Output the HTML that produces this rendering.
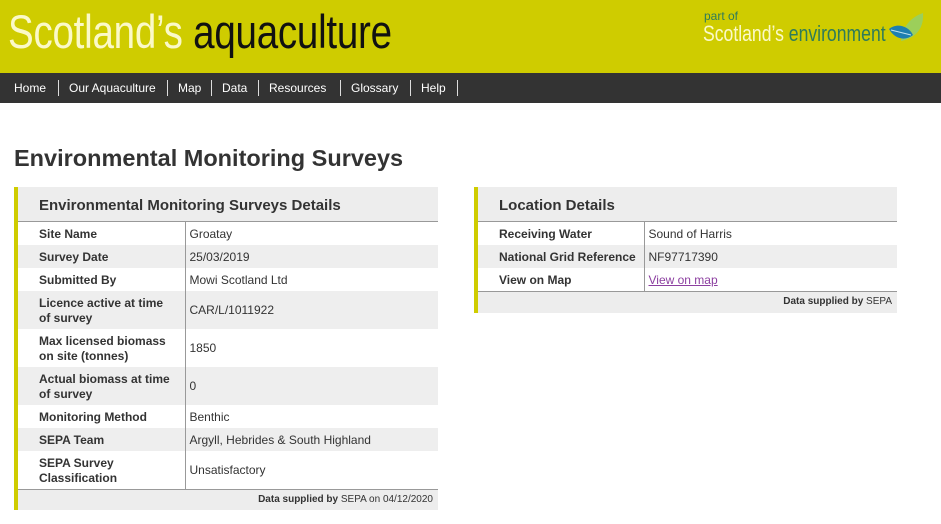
<!DOCTYPE html>
<html><head><meta charset="utf-8"><style>
*{margin:0;padding:0;box-sizing:border-box}
body{width:941px;height:524px;background:#fff;font-family:"Liberation Sans",Arial,sans-serif;position:relative;overflow:hidden;color:#333}
.hdr{position:absolute;left:0;top:0;width:941px;height:73px;background:#cfcc00}
.title{position:absolute;left:8px;top:4px;font-size:47px;white-space:nowrap;transform-origin:0 0;transform:scaleX(0.82);letter-spacing:-0.3px}
.title .a{color:#fbf9c8}.title .b{color:#111}
.pof{position:absolute;left:704px;top:9px;font-size:12px;color:#2f7b5a}
.se{position:absolute;left:703px;top:21px;font-size:22px;white-space:nowrap;transform-origin:0 0;transform:scaleX(0.8)}
.se .a{color:#fbf9c8}.se .b{color:#2f7b5a}
.nav{position:absolute;left:0;top:73px;width:941px;height:30px;background:#333;color:#fff;font-size:12px}
.nav span{position:absolute;top:8px}
.nav i{position:absolute;top:7px;width:1px;height:16px;background:#ddd}
h1{position:absolute;left:14px;top:145px;font-size:23.5px;font-weight:bold;color:#333}
.box{position:absolute;border-left:4px solid #cfcc00;background:#ededed}
.box h2{height:35px;font-size:15px;font-weight:bold;padding:10px 0 0 21px;color:#333;border-bottom:1px solid #999}
table{border-collapse:collapse;width:100%;font-size:12px}
td{padding:1px 0 0 21px;vertical-align:middle;line-height:15px}
td.l{font-weight:bold;color:#333;border-right:1px solid #999;padding-right:10px}
.r td.l{padding-right:2px;white-space:nowrap}
td.v{padding-left:4px;color:#333}
tr.w{background:#fff}tr.g{background:#eeeeee}
.foot{border-top:1px solid #999;font-size:10px;text-align:right;padding:4px 5px 0 0;height:20px;color:#333}
.foot b{font-weight:bold}
a{color:#8c3fa0;text-decoration:underline}
</style></head><body>
<div class="hdr">
<div class="title"><span class="a">Scotland’s</span> <span class="b">aquaculture</span></div>
<div class="pof">part of</div>
<div class="se"><span class="a">Scotland’s</span> <span class="b">environment</span></div>
<svg style="position:absolute;left:887px;top:11px" width="38" height="34" viewBox="0 0 38 34"><path d="M14 30 C15 16 24 6 36 2 C37 16 30 27 14 30Z" fill="#9ccf5a"/><path d="M2 18 C9 12 21 14 26 24 C17 31 7 27 2 18Z" fill="#1d7fb0"/><path d="M4 19 L24 24" stroke="#bfe3f0" stroke-width="1"/></svg>
</div>
<div class="nav">
<span style="left:14px">Home</span><i style="left:58px"></i>
<span style="left:69px">Our Aquaculture</span><i style="left:167px"></i>
<span style="left:178px">Map</span><i style="left:211px"></i>
<span style="left:222px">Data</span><i style="left:258px"></i>
<span style="left:269px">Resources</span><i style="left:340px"></i>
<span style="left:351px">Glossary</span><i style="left:410px"></i>
<span style="left:421px">Help</span><i style="left:457px"></i>
</div>
<h1>Environmental Monitoring Surveys</h1>
<div class="box" style="left:14px;top:187px;width:424px;height:323px">
<h2>Environmental Monitoring Surveys Details</h2>
<table>
<col style="width:167px"><col>
<tr class="w" style="height:23px"><td class="l">Site Name</td><td class="v">Groatay</td></tr>
<tr class="g" style="height:23px"><td class="l">Survey Date</td><td class="v">25/03/2019</td></tr>
<tr class="w" style="height:23px"><td class="l">Submitted By</td><td class="v">Mowi Scotland Ltd</td></tr>
<tr class="g" style="height:38px"><td class="l">Licence active at time of survey</td><td class="v">CAR/L/1011922</td></tr>
<tr class="w" style="height:38px"><td class="l">Max licensed biomass on site (tonnes)</td><td class="v">1850</td></tr>
<tr class="g" style="height:38px"><td class="l">Actual biomass at time of survey</td><td class="v">0</td></tr>
<tr class="w" style="height:23px"><td class="l">Monitoring Method</td><td class="v">Benthic</td></tr>
<tr class="g" style="height:23px"><td class="l">SEPA Team</td><td class="v">Argyll, Hebrides &amp; South Highland</td></tr>
<tr class="w" style="height:38px"><td class="l">SEPA Survey Classification</td><td class="v">Unsatisfactory</td></tr>
</table>
<div class="foot"><b>Data supplied by</b> SEPA on 04/12/2020</div>
</div>
<div class="box r" style="left:474px;top:187px;width:423px;height:126px">
<h2>Location Details</h2>
<table>
<col style="width:166px"><col>
<tr class="w" style="height:23px"><td class="l">Receiving Water</td><td class="v">Sound of Harris</td></tr>
<tr class="g" style="height:23px"><td class="l">National Grid Reference</td><td class="v">NF97717390</td></tr>
<tr class="w" style="height:23px"><td class="l">View on Map</td><td class="v"><a>View on map</a></td></tr>
</table>
<div class="foot"><b>Data supplied by</b> SEPA</div>
</div>
</body></html>
